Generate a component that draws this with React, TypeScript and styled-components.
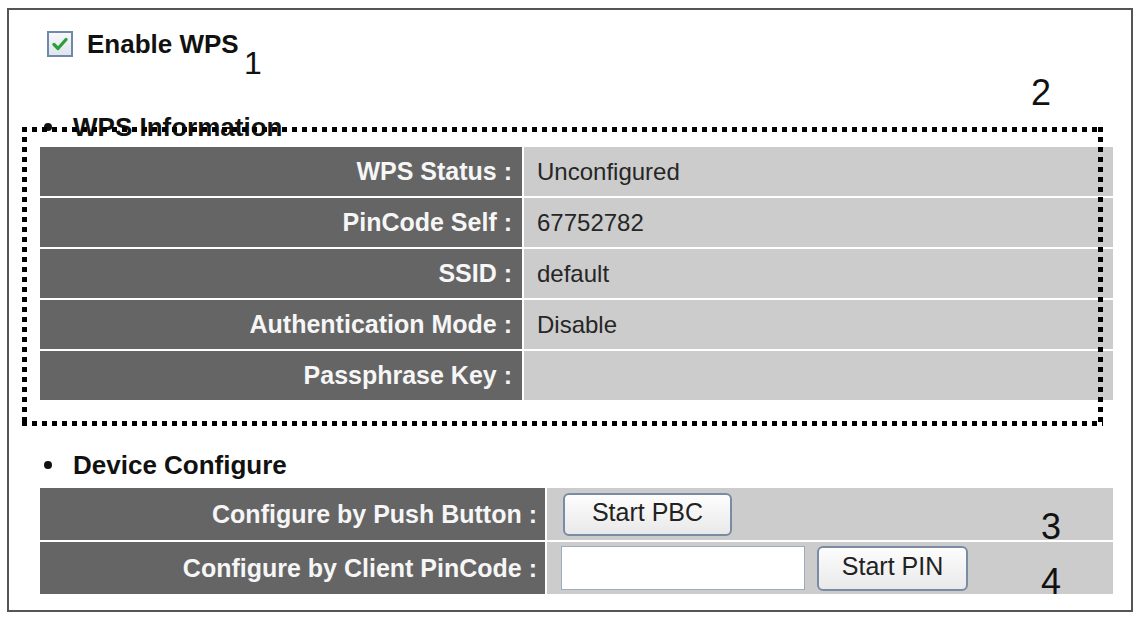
import React from "react";
import styled, { createGlobalStyle } from "styled-components";

const GlobalStyle = createGlobalStyle`
    html, body {
        margin: 0;
        padding: 0;
        background: #ffffff;
    }
    body {
        font-family: "Liberation Sans", Arial, sans-serif;
    }
`;

const wpsInfo = [
    { label: "WPS Status :", value: "Unconfigured" },
    { label: "PinCode Self :", value: "67752782" },
    { label: "SSID :", value: "default" },
    { label: "Authentication Mode :", value: "Disable" },
    { label: "Passphrase Key :", value: "" },
];

const App = () => {
    return (
        <>
            <GlobalStyle />
            <Page>
                <Frame>
                    <EnableRow>
                        <CheckBox>
                            <svg width="16" height="14" viewBox="0 0 16 14">
                                <path d="M2 7.5 L6 11.5 L14 2.5" fill="none" stroke="#2e9e3a" strokeWidth="3.2" strokeLinecap="round" strokeLinejoin="round" />
                            </svg>
                        </CheckBox>
                        <EnableLabel>Enable WPS</EnableLabel>
                    </EnableRow>

                    <WpsSection>
                        <SectionTitle>WPS Information</SectionTitle>
                        <Table>
                            {wpsInfo.map((item) => (
                                <Row key={item.label} $labelWidth={482} $height={49}>
                                    <LabelCell $padRight={10}>{item.label}</LabelCell>
                                    <ValueCell $padLeft={13}>{item.value}</ValueCell>
                                </Row>
                            ))}
                        </Table>
                    </WpsSection>

                    <DeviceTitle>Device Configure</DeviceTitle>
                    <DeviceTable>
                        <Row $labelWidth={505} $height={52}>
                            <LabelCell $padRight={8}>Configure by Push Button :</LabelCell>
                            <ValueCell $padLeft={16}>
                                <Button $width={169} $height={43}>Start PBC</Button>
                            </ValueCell>
                        </Row>
                        <Row $labelWidth={505} $height={52}>
                            <LabelCell $padRight={8}>Configure by Client PinCode :</LabelCell>
                            <ValueCell $padLeft={14}>
                                <PinInput type="text" />
                                <Button $width={151} $height={45}>Start PIN</Button>
                            </ValueCell>
                        </Row>
                    </DeviceTable>

                    <Callout $top={37} $left={235} $size={32}>1</Callout>
                    <Callout $top={65} $left={1022} $size={36}>2</Callout>
                    <Callout $top={499} $left={1032} $size={36}>3</Callout>
                    <Callout $top={554} $left={1032} $size={36}>4</Callout>
                </Frame>
            </Page>
        </>
    );
};

export default App;

const Page = styled.div`
    padding: 8px 0 0 7px;
`;

const Frame = styled.div`
    position: relative;
    box-sizing: border-box;
    width: 1126px;
    height: 604px;
    border: 2px solid #555555;
    padding: 21px 18px 0 31px;
    display: flex;
    flex-direction: column;
`;

const EnableRow = styled.div`
    display: flex;
    align-items: center;
    gap: 14px;
    height: 26px;
    margin-left: 7px;
`;

const CheckBox = styled.span`
    box-sizing: border-box;
    width: 26px;
    height: 26px;
    border: 2px solid #7088aa;
    background: linear-gradient(#f6f8fa, #dfe5ec);
    display: grid;
    place-items: center;
`;

const EnableLabel = styled.span`
    font-size: 26px;
    font-weight: bold;
    color: #111111;
`;

// the dotted frame is drawn over the section, passing through its heading
const WpsSection = styled.div`
    position: relative;
    margin-top: 55px;
    &::after {
        content: "";
        position: absolute;
        left: -18px;
        top: 15px;
        right: 10px;
        bottom: -26px;
        pointer-events: none;
        background:
            linear-gradient(90deg, #000 50%, transparent 0) left top / 10px 5px repeat-x,
            linear-gradient(90deg, #000 50%, transparent 0) left bottom / 10px 5px repeat-x,
            linear-gradient(180deg, #000 50%, transparent 0) left top / 5px 10px repeat-y,
            linear-gradient(180deg, #000 50%, transparent 0) right top / 5px 10px repeat-y;
    }
`;

const SectionTitle = styled.div`
    display: flex;
    align-items: center;
    height: 30px;
    padding-left: 4px;
    font-size: 26px;
    font-weight: bold;
    color: #111111;
    &::before {
        content: "";
        width: 8px;
        height: 8px;
        border-radius: 50%;
        background: #111111;
        margin-right: 21px;
    }
`;

const DeviceTitle = styled(SectionTitle)`
    margin-top: 50px;
`;

const Table = styled.div`
    display: flex;
    flex-direction: column;
    gap: 2px;
    margin-top: 5px;
`;

const DeviceTable = styled(Table)`
    margin-top: 8px;
`;

const Row = styled.div<{ $labelWidth: number; $height: number }>`
    display: grid;
    grid-template-columns: ${(p) => p.$labelWidth}px 1fr;
    column-gap: 2px;
    height: ${(p) => p.$height}px;
`;

const LabelCell = styled.div<{ $padRight: number }>`
    display: flex;
    align-items: center;
    justify-content: flex-end;
    padding-right: ${(p) => p.$padRight}px;
    background: #656565;
    color: #f6f6f6;
    font-size: 25px;
    font-weight: bold;
    white-space: nowrap;
`;

const ValueCell = styled.div<{ $padLeft: number }>`
    display: flex;
    align-items: center;
    gap: 12px;
    padding-left: ${(p) => p.$padLeft}px;
    background: #cccccc;
    color: #262626;
    font-size: 24px;
`;

const Button = styled.button<{ $width: number; $height: number }>`
    box-sizing: border-box;
    width: ${(p) => p.$width}px;
    height: ${(p) => p.$height}px;
    border: 2px solid #7a8ca4;
    border-radius: 6px;
    background: linear-gradient(#fdfdfd, #e9e9e9);
    font-family: "Liberation Sans", Arial, sans-serif;
    font-size: 25px;
    color: #222222;
    padding: 0 0 4px;
`;

const PinInput = styled.input`
    box-sizing: border-box;
    width: 244px;
    height: 44px;
    border: 1px solid #9aabc2;
    background: #ffffff;
    outline: none;
`;

const Callout = styled.span<{ $top: number; $left: number; $size: number }>`
    position: absolute;
    top: ${(p) => p.$top}px;
    left: ${(p) => p.$left}px;
    font-size: ${(p) => p.$size}px;
    line-height: 1;
    color: #111111;
`;
